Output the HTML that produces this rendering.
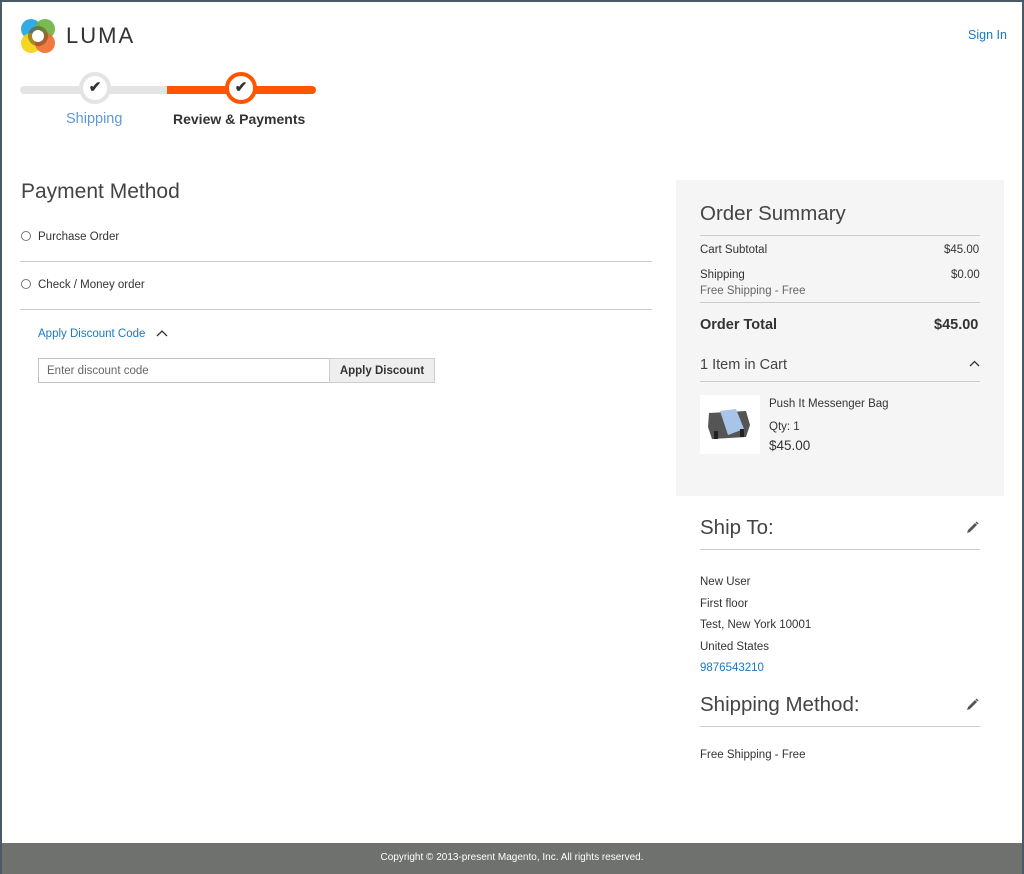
<!DOCTYPE html>
<html><head><meta charset="utf-8"><style>
*{box-sizing:border-box;margin:0;padding:0}
html,body{width:1024px;height:874px;overflow:hidden}
body{font-family:"Liberation Sans",sans-serif;color:#333;background:#fff;position:relative}
.frame{position:fixed;left:0;top:0;width:1024px;height:874px;border:2px solid #4a5a66;border-bottom:none;pointer-events:none;z-index:5}
.a{position:absolute}
.link{color:#1979c3}
.line{position:absolute;height:1px;background:#ccc}
.h{color:#444}
.t{font-size:11.5px;margin-top:2px}
</style></head><body>
<div class="frame"></div>
<svg class="a" style="left:20px;top:18px" width="36" height="36" viewBox="0 0 36 36">
<circle cx="11" cy="11" r="10" fill="#1fa2e0" opacity=".9"/>
<circle cx="25" cy="11" r="10" fill="#6cb33f" opacity=".9"/>
<circle cx="11" cy="25" r="10" fill="#f5d20c" opacity=".9"/>
<circle cx="25" cy="25" r="10" fill="#ef6b2c" opacity=".9"/>
<circle cx="18" cy="18" r="10" fill="#6a4a2a" opacity=".55"/>
<circle cx="18" cy="18" r="6" fill="#fff"/>
</svg>
<div class="a" style="left:66px;top:23px;font-size:22px;letter-spacing:2px;color:#333">LUMA</div>
<div class="a link" style="left:968px;top:28px;font-size:12.5px">Sign In</div>

<div class="a" style="left:20px;top:86px;width:148px;height:8px;border-radius:4px 0 0 4px;background:#e4e4e4"></div>
<div class="a" style="left:167px;top:86px;width:149px;height:8px;border-radius:0 4px 4px 0;background:#ff5501"></div>
<div class="a" style="left:79px;top:72px;width:32px;height:32px;border-radius:50%;background:#fff;border:4px solid #e4e4e4;text-align:center;font-size:15px;line-height:23px;font-weight:bold;color:#333">✔</div>
<div class="a" style="left:225px;top:72px;width:32px;height:32px;border-radius:50%;background:#fff;border:4px solid #ff5501;text-align:center;font-size:15px;line-height:23px;font-weight:bold;color:#333">✔</div>
<div class="a link" style="left:66px;top:111px;font-size:14.5px;color:#5d9ad8">Shipping</div>
<div class="a" style="left:173px;top:111px;font-size:14px;font-weight:bold">Review &amp; Payments</div>

<div class="a h" style="left:21px;top:180px;font-size:21px">Payment Method</div>
<div class="a" style="left:21px;top:231px;width:10px;height:10px;border:1px solid #777;border-radius:50%"></div>
<div class="a t" style="left:38px;top:229px">Purchase Order</div>
<div class="line" style="left:20px;top:261px;width:632px"></div>
<div class="a" style="left:21px;top:279px;width:10px;height:10px;border:1px solid #777;border-radius:50%"></div>
<div class="a t" style="left:38px;top:277px">Check / Money order</div>
<div class="line" style="left:20px;top:309px;width:632px"></div>
<div class="a link t" style="left:38px;top:326px">Apply Discount Code</div>
<svg class="a" style="left:156px;top:329px" width="12" height="8"><path d="M1 7 L6 2 L11 7" stroke="#333" stroke-width="1.3" fill="none"/></svg>
<div class="a t" style="left:38px;top:356px;width:292px;height:25px;border:1px solid #c2c2c2;color:#666;padding:6px 8px">Enter discount code</div>
<div class="a t" style="left:329px;top:356px;width:106px;height:25px;border:1px solid #cdcdcd;background:#eee;font-weight:bold;text-align:center;line-height:24px">Apply Discount</div>

<div class="a" style="left:676px;top:180px;width:328px;height:316px;background:#f5f5f5"></div>
<div class="a h" style="left:700px;top:202px;font-size:20.5px">Order Summary</div>
<div class="line" style="left:700px;top:235px;width:280px"></div>
<div class="a t" style="left:700px;top:242px">Cart Subtotal</div>
<div class="a t" style="left:944px;top:242px">$45.00</div>
<div class="a t" style="left:700px;top:267px">Shipping</div>
<div class="a t" style="left:951px;top:267px">$0.00</div>
<div class="a t" style="left:700px;top:283px;color:#666">Free Shipping - Free</div>
<div class="line" style="left:700px;top:302px;width:280px"></div>
<div class="a" style="left:700px;top:317px;font-size:14.5px;font-weight:bold">Order Total</div>
<div class="a" style="left:934px;top:317px;font-size:14.5px;font-weight:bold">$45.00</div>
<div class="a h" style="left:700px;top:357px;font-size:14.5px">1 Item in Cart</div>
<svg class="a" style="left:969px;top:360px" width="11" height="7"><path d="M1 6 L5.5 1.5 L10 6" stroke="#333" stroke-width="1.3" fill="none"/></svg>
<div class="line" style="left:700px;top:381px;width:280px"></div>
<div class="a" style="left:700px;top:395px;width:60px;height:59px;background:#fff"></div>
<svg class="a" style="left:706px;top:405px" width="48" height="38" viewBox="0 0 48 38"><path d="M3 8 L40 6 L44 20 L40 32 L6 34 L2 22Z" fill="#555"/><path d="M14 6 L30 4 L38 24 L22 30Z" fill="#a8c4e8"/><rect x="8" y="26" width="4" height="8" fill="#222"/><rect x="34" y="24" width="4" height="8" fill="#222"/></svg>
<div class="a t" style="left:769px;top:396px">Push It Messenger Bag</div>
<div class="a t" style="left:769px;top:419px">Qty: 1</div>
<div class="a" style="left:769px;top:438px;font-size:13.5px">$45.00</div>

<div class="a h" style="left:700px;top:516px;font-size:20.5px">Ship To:</div>
<svg class="a" style="left:966px;top:521px" width="13" height="13" viewBox="0 0 13 13"><path d="M1 12 L2 9 L9 2 L11 4 L4 11Z" fill="#555"/><path d="M10 1 L12 3" stroke="#555" stroke-width="1.5"/></svg>
<div class="line" style="left:700px;top:549px;width:280px"></div>
<div class="a t" style="left:700px;top:570px;line-height:21.5px">New User<br>First floor<br>Test, New York 10001<br>United States<br><span class="link">9876543210</span></div>
<div class="a h" style="left:700px;top:693px;font-size:20.5px">Shipping Method:</div>
<svg class="a" style="left:966px;top:698px" width="13" height="13" viewBox="0 0 13 13"><path d="M1 12 L2 9 L9 2 L11 4 L4 11Z" fill="#555"/><path d="M10 1 L12 3" stroke="#555" stroke-width="1.5"/></svg>
<div class="line" style="left:700px;top:726px;width:280px"></div>
<div class="a t" style="left:700px;top:747px">Free Shipping - Free</div>

<div class="a" style="left:0;top:843px;width:1024px;height:31px;background:#6e716e;color:#fff;font-size:10px;text-align:center;line-height:29px">Copyright © 2013-present Magento, Inc. All rights reserved.</div>
</body></html>
